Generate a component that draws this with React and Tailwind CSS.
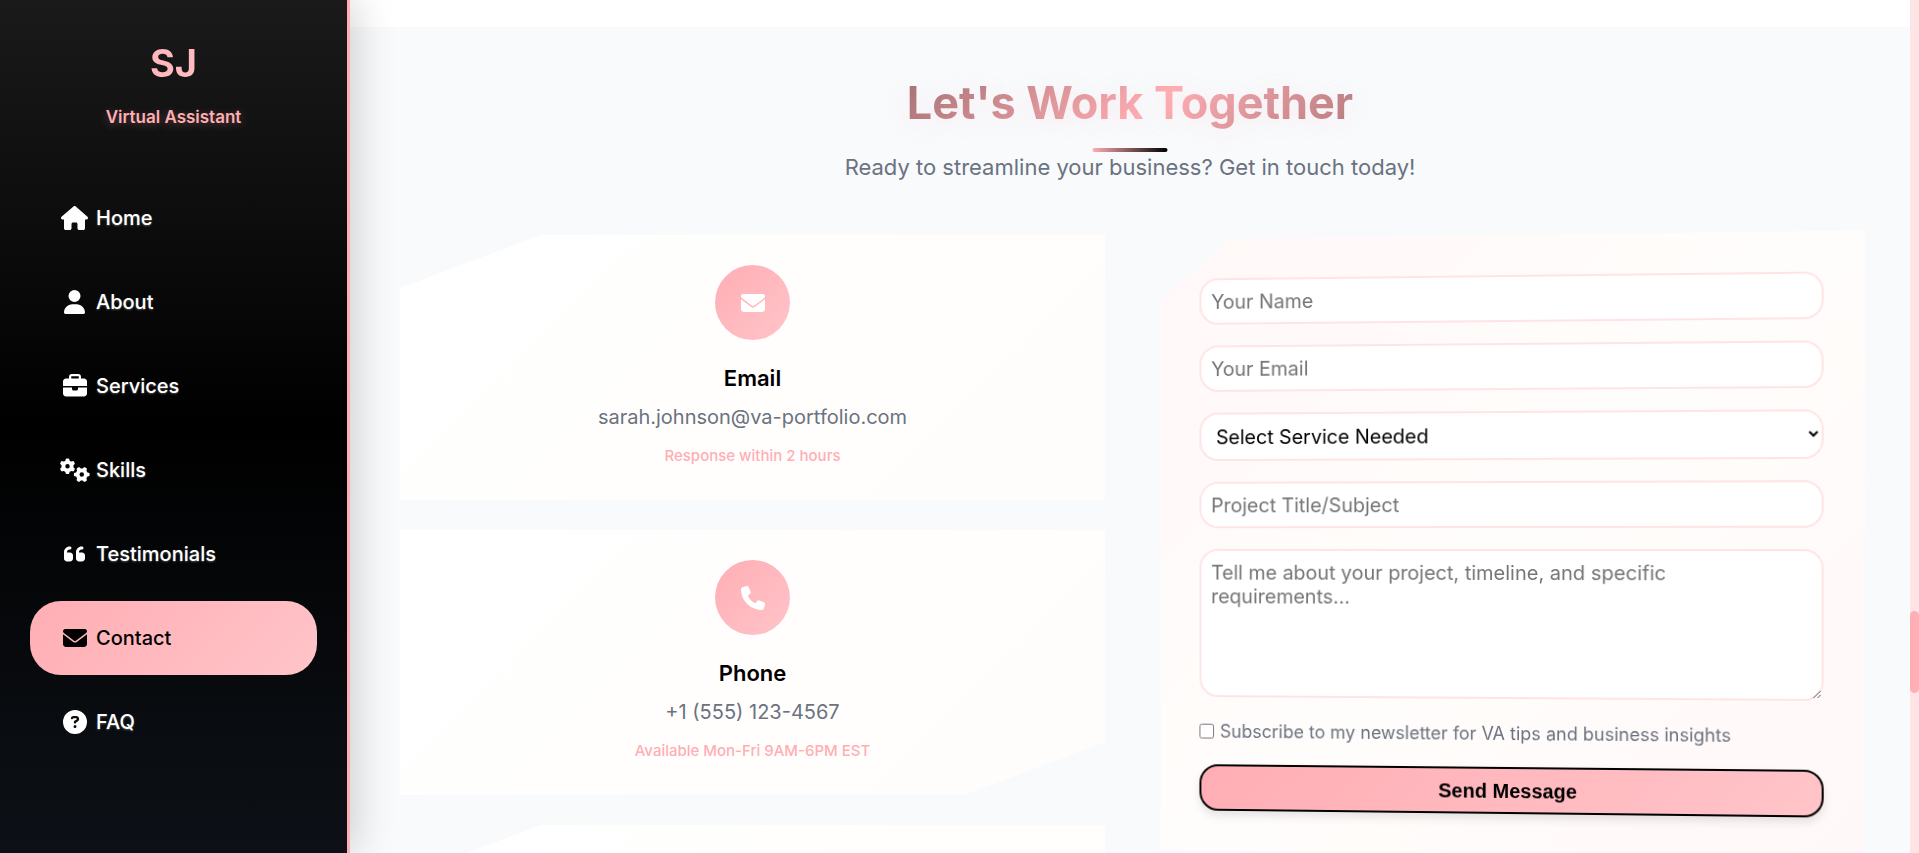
import React from 'react';
import {
  FaHouse,
  FaUser,
  FaBriefcase,
  FaGears,
  FaQuoteLeft,
  FaEnvelope,
  FaCircleQuestion,
  FaPhone,
} from 'react-icons/fa6';

const navItems = [
  { label: 'Home', icon: FaHouse, size: 'w-[27px]' },
  { label: 'About', icon: FaUser, size: 'w-[21px]' },
  { label: 'Services', icon: FaBriefcase, size: 'w-[24px]' },
  { label: 'Skills', icon: FaGears, size: 'w-[30px]' },
  { label: 'Testimonials', icon: FaQuoteLeft, size: 'w-[21px]' },
  { label: 'Contact', icon: FaEnvelope, size: 'w-[24px]', active: true },
  { label: 'FAQ', icon: FaCircleQuestion, size: 'w-[24px]' },
];

const cutTopLeft = '[clip-path:polygon(20%_0,100%_0,100%_100%,0_100%,0_20%)]';
const cutBottomRight = '[clip-path:polygon(0_0,100%_0,100%_80%,80%_100%,0_100%)]';
const cardBackground = 'bg-[linear-gradient(135deg,#ffffff,#fffdfb)]';

const contacts = [
  { title: 'Email', value: 'sarah.johnson@va-portfolio.com', note: 'Response within 2 hours', icon: FaEnvelope, shape: cutTopLeft },
  { title: 'Phone', value: '+1 (555) 123-4567', note: 'Available Mon-Fri 9AM-6PM EST', icon: FaPhone, shape: cutBottomRight },
];

const field =
  'block w-full rounded-[19px] border-2 border-[#ffe4e6] bg-white text-[20px] leading-[24px] text-black placeholder:text-[#757575] placeholder:opacity-100';

function Sidebar() {
  return (
    <aside className="relative z-10 h-full w-[350px] shrink-0 border-r-[3px] border-[#ffaeb4] bg-[linear-gradient(180deg,#1a1a1a_0%,#000_50%,#0d1117_100%)] px-[30px] pt-[38px] shadow-[5px_0_38px_rgba(0,0,0,0.18)]">
      <div className="text-center">
        <h1 className="bg-[linear-gradient(135deg,#ffaeb4,#ffc4c9)] bg-clip-text text-[38px] leading-[50px] font-bold text-transparent">
          SJ
        </h1>
        <p className="mt-[15px] text-[17px] leading-[28px] font-semibold text-[#ffaeb4] [text-shadow:0_2px_10px_rgba(255,174,180,0.3)]">
          Virtual Assistant
        </p>
      </div>
      <nav className="mt-[50px] flex flex-col gap-[10px]">
        {navItems.map(({ label, icon: Icon, size, active }) => (
          <a
            key={label}
            href={'#' + label.toLowerCase()}
            className={
              'flex h-[74px] items-center gap-[8px] rounded-[31px] px-[31px] text-[20px] font-medium ' +
              (active
                ? 'bg-[linear-gradient(135deg,#ffaeb4,#ffc4c9)] text-black'
                : 'text-white [text-shadow:0_1px_2px_rgba(255,255,255,0.3)]')
            }
          >
            <span className="flex w-[27px] shrink-0 justify-center">
              <Icon className={'h-[24px] max-w-none shrink-0 ' + size} />
            </span>
            {label}
          </a>
        ))}
      </nav>
    </aside>
  );
}

function ContactCard({ title, value, note, icon: Icon, shape }) {
  return (
    <article
      className={'flex flex-col items-center px-[30px] pt-[30px] pb-[32px] text-center ' + cardBackground + ' ' + shape}
    >
      <div className="flex size-[75px] items-center justify-center rounded-full bg-[linear-gradient(135deg,#ffaeb4,#ffc4c9)] text-white">
        <Icon className="size-[24px]" />
      </div>
      <h3 className="mt-[20px] text-[22px] leading-[36px] font-semibold text-black">{title}</h3>
      <p className="mt-[5px] text-[20px] leading-[32px] text-[#6b7280]">{value}</p>
      <p className="mt-[10px] text-[15px] leading-[25px] font-medium text-[#ffaeb4]">{note}</p>
    </article>
  );
}

function ContactForm() {
  return (
    <form
      onSubmit={(e) => e.preventDefault()}
      className="flex flex-col gap-[21px] self-start bg-[linear-gradient(135deg,#fff8f8,#fffdfb_50%,#fff8f8)] p-[40px] [clip-path:polygon(10%_0,100%_0,100%_100%,0_100%,0_10%)] [transform:perspective(1250px)_rotateY(-3deg)]"
    >
      <input type="text" aria-label="Your Name" placeholder="Your Name" className={field + ' h-[47px] px-[10px]'} />
      <input type="email" aria-label="Your Email" placeholder="Your Email" className={field + ' h-[47px] px-[10px]'} />
      <select aria-label="Select Service Needed" defaultValue="" className={field + ' h-[49px] px-[11px]'}>
        <option value="">Select Service Needed</option>
      </select>
      <input
        type="text"
        aria-label="Project Title/Subject"
        placeholder="Project Title/Subject"
        className={field + ' h-[47px] px-[10px]'}
      />
      <textarea
        aria-label="Project details"
        placeholder="Tell me about your project, timeline, and specific requirements..."
        className={field + ' h-[150px] resize-y p-[10px]'}
      />
      <label className="flex h-[26px] items-center gap-[6px] text-[18px] text-[#6b7280]">
        <input type="checkbox" className="size-[15px]" />
        Subscribe to my newsletter for VA tips and business insights
      </label>
      <button
        type="submit"
        className="h-[47px] rounded-[19px] border-2 border-black bg-[linear-gradient(135deg,#ffaeb4,#ffc4c9)] font-['Liberation_Sans',sans-serif] text-[20px] font-bold text-black shadow-[0_5px_10px_rgba(0,0,0,0.1)]"
      >
        Send Message
      </button>
    </form>
  );
}

export default function App() {
  return (
    <div className="flex h-screen overflow-hidden bg-white font-['Inter',sans-serif]">
      <Sidebar />
      <main className="min-w-0 flex-1 overflow-hidden pt-[27px]">
        <section className="bg-[#f8fafc] px-[50px] pt-[48px] pb-[100px]">
          <header className="text-center">
            <div className="relative">
              <h2 className="bg-[linear-gradient(135deg,#000,#ffaeb4_52%,#000)] bg-clip-text text-[45px] leading-[56px] font-bold text-transparent [text-shadow:0_3px_25px_rgba(255,174,180,0.2)]">
                Let's Work Together
              </h2>
              <span className="absolute top-[73px] left-1/2 h-[4px] w-[75px] -translate-x-1/2 rounded-[2px] bg-[linear-gradient(90deg,#ffaeb4,#000)]" />
            </div>
            <p className="mt-[18px] text-[22px] leading-[36px] text-[#6b7280]">
              Ready to streamline your business? Get in touch today!
            </p>
          </header>
          <div className="mt-[50px] grid grid-cols-2 gap-[50px]">
            <div className="flex flex-col gap-[30px]">
              {contacts.map((c) => (
                <ContactCard key={c.title} {...c} />
              ))}
              <article className={'h-[265px] ' + cardBackground + ' ' + cutTopLeft} />
            </div>
            <ContactForm />
          </div>
        </section>
      </main>
      <div className="flex w-[9px] shrink-0 flex-col bg-[#ffe4e6]">
        <div className="mt-[611px] h-[82px] rounded-[5px] bg-[#ffaeb4]" />
      </div>
    </div>
  );
}
